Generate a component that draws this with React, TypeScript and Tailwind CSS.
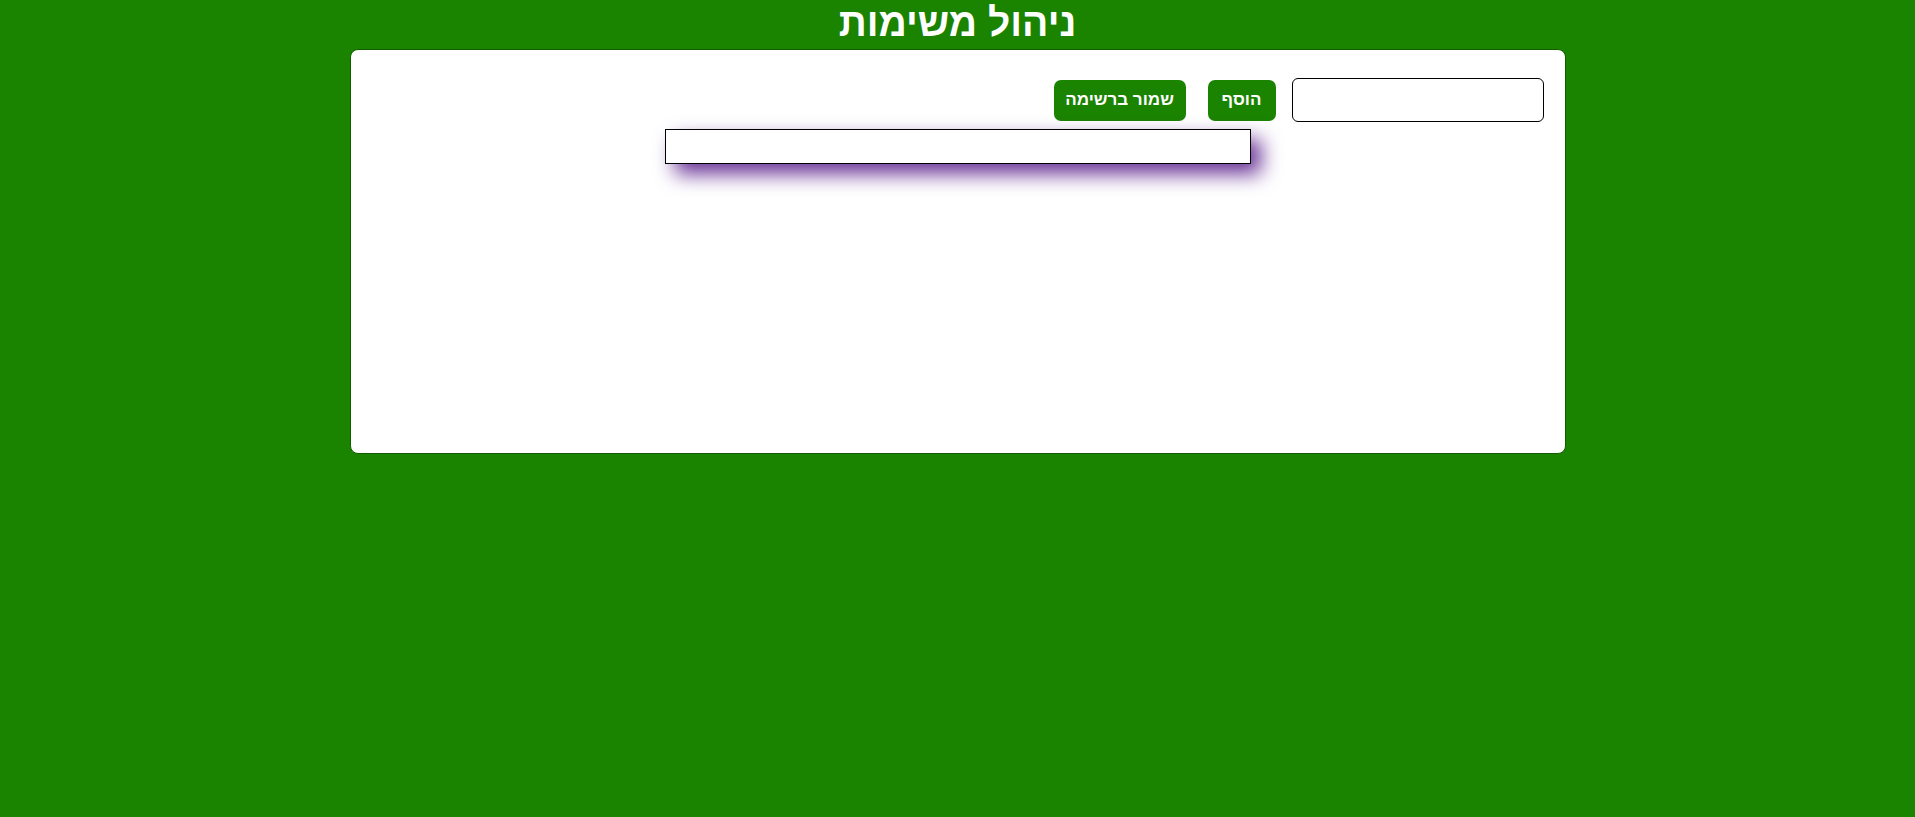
import React from 'react';

// מסך ניהול משימות: כותרת, כרטיס לבן עם שדה קלט, כפתורים ורשימה ריקה
export default function App() {
  return (
    <div className="min-h-[817px] bg-[#1a8300] font-['Liberation_Sans',Arial,sans-serif]" dir="rtl">
      <h1 className="text-center text-[39px] font-bold text-white leading-[46px] h-[49px]">ניהול משימות</h1>
      <div className="mx-auto w-[1216px] h-[405px] bg-white border border-[#125c00] rounded-[8px] pt-[28px] pr-[21px]">
        <div className="flex items-center">
          <input className="w-[252px] h-[44px] border border-black rounded-[6px] px-2 outline-none" />
          <button className="mr-[16px] w-[68px] h-[41px] bg-[#1a8300] text-white font-bold text-[17px] rounded-[7px]">הוסף</button>
          <button className="mr-[22px] w-[132px] h-[41px] bg-[#1a8300] text-white font-bold text-[17px] rounded-[7px]">שמור ברשימה</button>
        </div>
        <div className="flex justify-center mt-[7px] pl-[21px]">
          <ul className="w-[586px] h-[35px] border border-black bg-white shadow-[10px_10px_20px_#6a3497]"></ul>
        </div>
      </div>
    </div>
  );
}
